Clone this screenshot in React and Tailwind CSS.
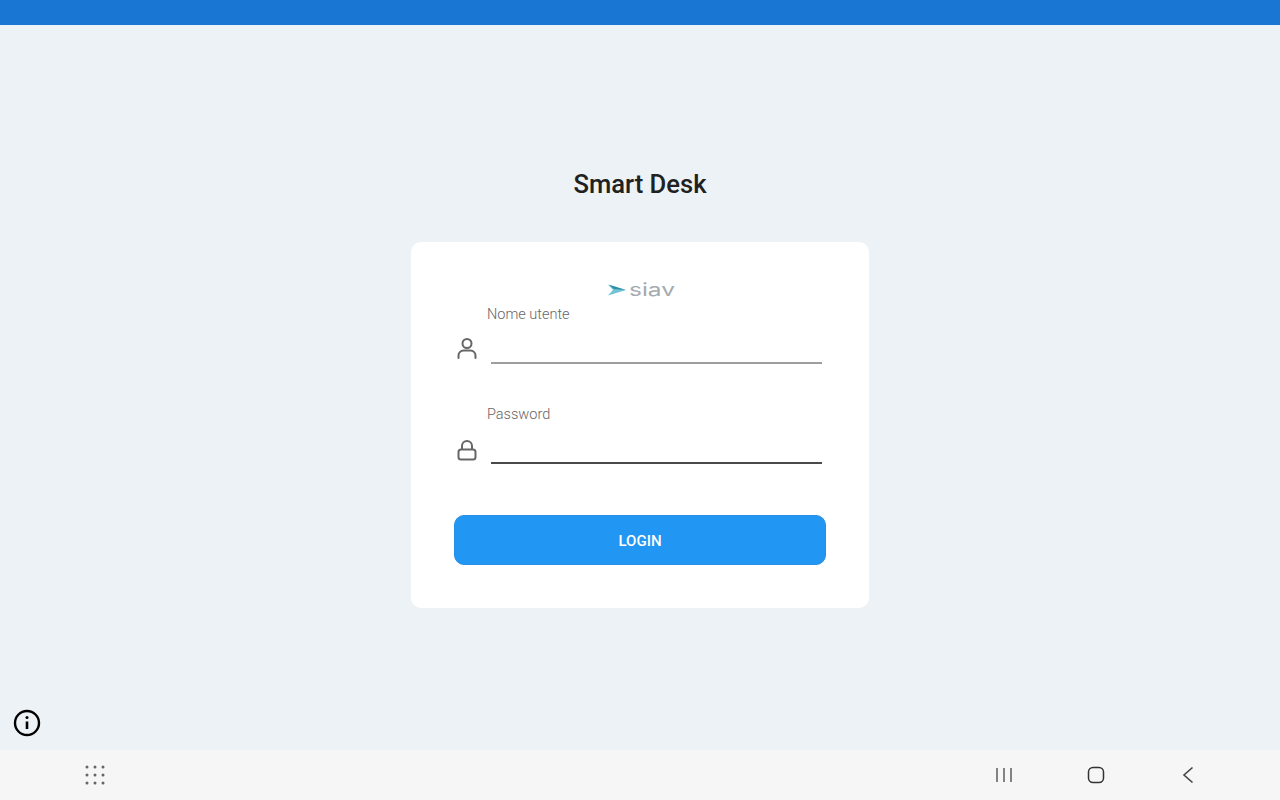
import React from "react";

function Field({ label, lineClass, icon }) {
  return (
    <div className="flex flex-col">
      <span className="ml-[33px] h-[20px] text-[14.5px] leading-[20px] text-[#666666] font-light">
        {label}
      </span>
      <div className="mt-[8px] flex items-end">
        <div className="flex h-[30px] w-[26px] items-center justify-center mb-[1px]">
          {icon}
        </div>
        <div className={`ml-[11px] w-[331px] ${lineClass}`} />
      </div>
    </div>
  );
}

function UserIcon() {
  return (
    <svg width="24" height="24" viewBox="0 0 24 24" fill="none" stroke="#666666" strokeWidth="2" strokeLinecap="round">
      <circle cx="12" cy="7.5" r="4.5" />
      <path d="M3.5 22v-2.5c0-3 2.5-5 5-5h7c2.5 0 5 2 5 5V22" />
    </svg>
  );
}

function LockIcon() {
  return (
    <svg className="translate-y-[1px]" width="24" height="24" viewBox="0 0 24 24" fill="none" stroke="#666666" strokeWidth="2" strokeLinejoin="round">
      <rect x="3.5" y="12.5" width="17" height="10" rx="2.5" />
      <path d="M7 12.5V9a5 5 0 0 1 10 0v3.5" />
    </svg>
  );
}

function SiavLogo() {
  return (
    <div className="flex h-[14px] items-center justify-center">
      <svg width="18" height="12" viewBox="0 0 18 12">
        <path d="M0 0.5 L18 6 L0 11.5 L5 6 Z" fill="#6fc3d3" />
        <path d="M1 0.8 L18 6 L6 5 Z" fill="#2b8ea8" />
      </svg>
      <span className="ml-[3px] w-[44px] origin-left scale-x-[1.36] text-[18px] leading-[14px] text-[#a3abb0] font-['Inter']">
        siav
      </span>
    </div>
  );
}

export default function App() {
  return (
    <div className="flex h-[800px] w-[1280px] flex-col overflow-hidden bg-[#ecf2f5] font-['Roboto',sans-serif]">
      <div className="h-[25px] bg-[#1976d2]" />

      <main className="relative flex flex-1 flex-col items-center">
        <h1 className="mt-[142px] text-[25.6px] leading-[34px] font-medium text-[#212121]">
          Smart Desk
        </h1>

        <div className="mt-[41px] h-[366px] w-[458px] rounded-[10px] bg-white px-[43px] pt-[41px]">
          <SiavLogo />
          <div className="mt-[8px]">
            <Field
              label="Nome utente"
              icon={<UserIcon />}
              lineClass="h-[2px] bg-[#9e9e9e]"
            />
          </div>
          <div className="mt-[41px]">
            <Field
              label="Password"
              icon={<LockIcon />}
              lineClass="h-[2px] bg-[#4a4a4a]"
            />
          </div>
          <button className="mt-[51px] flex h-[50px] w-[372px] items-center justify-center rounded-[10px] border border-[#2a8fe6] bg-[#2196f3] pt-[2px] text-[15px] font-medium text-white">
            LOGIN
          </button>
        </div>

        <svg
          className="absolute left-[13px] bottom-[13px]"
          width="28"
          height="28"
          viewBox="0 0 28 28"
          fill="none"
          stroke="#000000"
          strokeWidth="2.4"
        >
          <circle cx="14" cy="14" r="12" />
          <path d="M14 12.5V20" strokeWidth="2.6" />
          <circle cx="14" cy="8.5" r="1.5" fill="#000000" stroke="none" />
        </svg>
      </main>

      <nav className="flex h-[50px] items-center bg-[#f6f6f6]">
        <svg className="ml-[85px]" width="20" height="20" viewBox="0 0 20 20" fill="#666666">
          {[2, 10, 18].map((y) =>
            [2, 10, 18].map((x) => <circle key={`${x}-${y}`} cx={x} cy={y} r="1.5" />)
          )}
        </svg>

        <div className="ml-auto flex items-center">
          <svg width="18" height="16" viewBox="0 0 18 16" stroke="#666666" strokeWidth="1.6">
            <path d="M2 1v14M9 1v14M16 1v14" />
          </svg>
          <svg className="ml-[74px]" width="18" height="18" viewBox="0 0 18 18" fill="none" stroke="#333333" strokeWidth="1.5">
            <rect x="1.5" y="1.5" width="15" height="15" rx="4.5" />
          </svg>
          <svg className="ml-[77px] mr-[86px]" width="12" height="18" viewBox="0 0 12 18" fill="none" stroke="#444444" strokeWidth="1.6">
            <path d="M10.5 1.5 L2 9 L10.5 16.5" />
          </svg>
        </div>
      </nav>
    </div>
  );
}
